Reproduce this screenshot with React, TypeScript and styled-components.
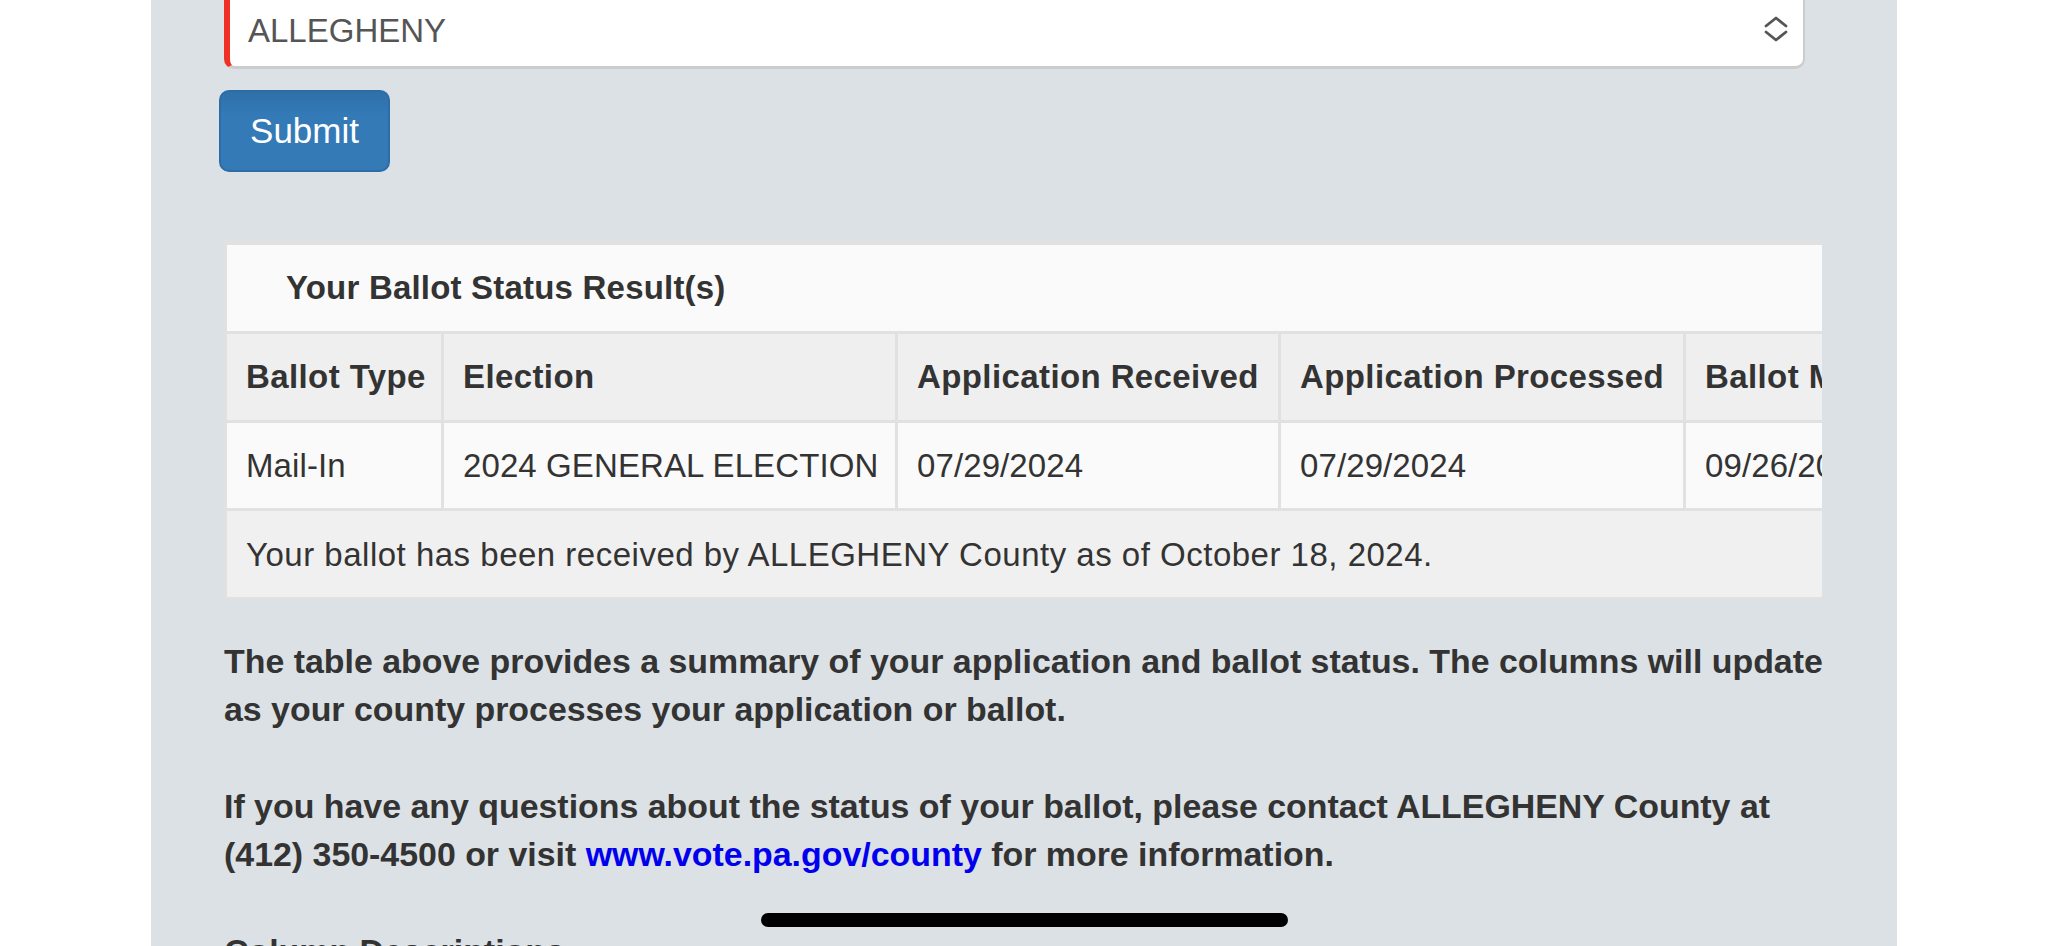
import * as React from 'react';
import styled, { createGlobalStyle } from 'styled-components';

const GlobalStyle = createGlobalStyle`
  html, body {
    margin: 0;
    padding: 0;
    height: 946px;
    overflow: hidden;
    background: #fff;
  }
  body {
    font-family: 'Liberation Sans', Arial, Helvetica, sans-serif;
    color: #333;
  }
`;

const Page = styled.div`
  height: 946px;
  overflow: hidden;
  background: #fff;
`;

const Panel = styled.main`
  box-sizing: border-box;
  width: 1746px;
  min-height: 1200px;
  margin-left: 151px;
  padding: 0 75px 0 73px;
  background: #dce1e5;
`;

const Form = styled.form`
  display: flex;
  flex-direction: column;
  align-items: flex-start;
  margin-top: -11px;
`;

const SelectBox = styled.div`
  box-sizing: border-box;
  width: 1581px;
  height: 80px;
  display: flex;
  align-items: center;
  justify-content: space-between;
  padding: 5px 15px 0 18px;
  background: #fff;
  border: 2px solid #cccccc;
  border-bottom-width: 3px;
  border-left: 6px solid #ee3124;
  border-radius: 10px;
  font-size: 33px;
  color: #555;
`;

const Chevrons = styled.svg`
  width: 24px;
  height: 26px;
  margin-top: -4px;
  fill: none;
  stroke: #555;
  stroke-width: 2.8;
  stroke-linecap: round;
  stroke-linejoin: round;
`;

const SubmitButton = styled.button`
  box-sizing: border-box;
  width: 171px;
  height: 82px;
  margin: 21px 0 0 -5px;
  padding: 0;
  border: 2px solid #2e6da4;
  border-radius: 10px;
  background: linear-gradient(#2f70aa, #337ab7 30%);
  color: #fff;
  font-family: 'Liberation Sans', Arial, sans-serif;
  font-size: 35px;
`;

const TableWrap = styled.div`
  width: 1598px;
  margin-top: 67px;
  overflow: hidden;
`;

const Table = styled.table`
  width: 2222px;
  table-layout: fixed;
  border-collapse: separate;
  border-spacing: 0;
  font-size: 33px;
`;

const Col = styled.col<{ $w: number }>`
  width: ${p => p.$w}px;
`;

type CellKind = 'caption' | 'head' | 'data' | 'note';

const backgrounds: Record<CellKind, string> = {
  caption: '#fafafa',
  head: '#efefef',
  data: '#fafafa',
  note: '#f0f0f0'
};

const spacing: Record<CellKind, string> = {
  caption: '0.2px',
  head: '0.4px',
  data: '0.1px',
  note: '0.5px'
};

const Cell = styled.td<{ $kind: CellKind; $first?: boolean }>`
  box-sizing: border-box;
  padding: ${p => (p.$kind === 'note' ? '20px 19px 18px' : '19px')};
  padding-left: ${p => (p.$kind === 'caption' ? '59px' : '19px')};
  line-height: ${p => (p.$kind === 'data' ? '47px' : '48px')};
  text-align: left;
  white-space: nowrap;
  overflow: hidden;
  letter-spacing: ${p => spacing[p.$kind]};
  font-weight: ${p => (p.$kind === 'caption' || p.$kind === 'head' ? 700 : 400)};
  background: ${p => backgrounds[p.$kind]};
  border-right: 3px solid #e1e1e1;
  border-bottom: ${p => (p.$kind === 'note' ? '2px' : '3px')} solid #e1e1e1;
  border-top: ${p => (p.$kind === 'caption' ? '6px solid #e1e1e1' : '0')};
  border-left: ${p => (p.$first ? '3px solid #e1e1e1' : '0')};
`;

const Paragraph = styled.p`
  margin: 0 -20px 49px 0;
  font-size: 33.9px;
  font-weight: 700;
  line-height: 48px;
  color: #333;

  &:first-of-type {
    margin-top: 38px;
  }
`;

const Link = styled.a`
  color: #0000ee;
  text-decoration: none;
`;

const HomeIndicator = styled.div`
  position: fixed;
  left: 761px;
  bottom: 19px;
  width: 527px;
  height: 14px;
  border-radius: 7px;
  background: #000;
`;

const columns = [
  { title: 'Ballot Type', value: 'Mail-In', width: 220 },
  { title: 'Election', value: '2024 GENERAL ELECTION', width: 454 },
  { title: 'Application Received', value: '07/29/2024', width: 383 },
  { title: 'Application Processed', value: '07/29/2024', width: 405 },
  { title: 'Ballot Mailed', value: '09/26/2024', width: 380 },
  { title: 'Ballot Received', value: '10/18/2024', width: 380 }
];

export default function App() {
  return (
    <Page>
      <GlobalStyle />
      <Panel>
        <Form onSubmit={e => e.preventDefault()}>
          <SelectBox>
            <span>ALLEGHENY</span>
            <Chevrons viewBox='0 0 24 26'>
              <polyline points='2,10 12,2 22,10' />
              <polyline points='2,16 12,24 22,16' />
            </Chevrons>
          </SelectBox>
          <SubmitButton type='submit'>Submit</SubmitButton>
        </Form>

        <TableWrap>
          <Table>
            <colgroup>
              {columns.map(c => (
                <Col key={c.title} $w={c.width} />
              ))}
            </colgroup>
            <tbody>
              <tr>
                <Cell as='th' $kind='caption' $first colSpan={columns.length}>
                  Your Ballot Status Result(s)
                </Cell>
              </tr>
              <tr>
                {columns.map((c, i) => (
                  <Cell as='th' key={c.title} $kind='head' $first={i === 0}>
                    {c.title}
                  </Cell>
                ))}
              </tr>
              <tr>
                {columns.map((c, i) => (
                  <Cell key={c.title} $kind='data' $first={i === 0}>
                    {c.value}
                  </Cell>
                ))}
              </tr>
              <tr>
                <Cell $kind='note' $first colSpan={columns.length}>
                  Your ballot has been received by ALLEGHENY County as of October 18, 2024.
                </Cell>
              </tr>
            </tbody>
          </Table>
        </TableWrap>

        <Paragraph>
          The table above provides a summary of your application and ballot status. The columns will update
          as your county processes your application or ballot.
        </Paragraph>
        <Paragraph>
          If you have any questions about the status of your ballot, please contact ALLEGHENY County at (412)
          350-4500 or visit <Link href='#'>www.vote.pa.gov/county</Link> for more information.
        </Paragraph>
        <Paragraph>Column Descriptions</Paragraph>
      </Panel>
      <HomeIndicator />
    </Page>
  );
}
